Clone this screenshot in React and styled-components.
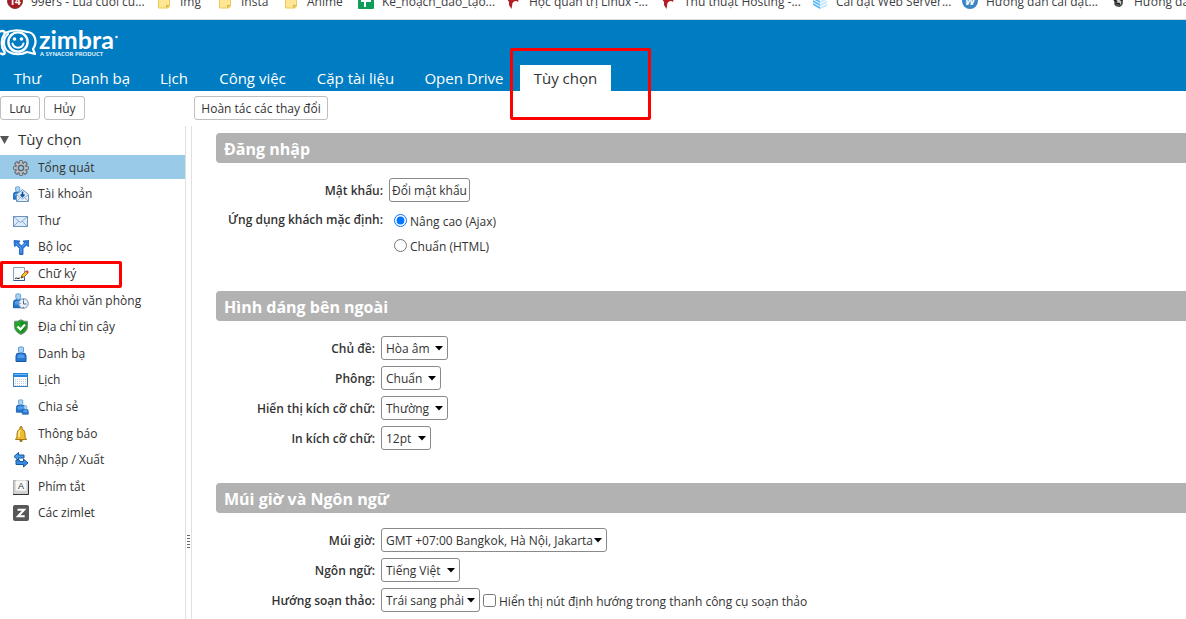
import React, { useState } from "react";
import styled, { createGlobalStyle, css } from "styled-components";

const GlobalStyle = createGlobalStyle`
  *, *::before, *::after { box-sizing: border-box; }
  html, body { margin: 0; height: 100%; overflow: hidden; background: #fff; }
  body, button, select, input {
    font-family: "Segoe UI", "Open Sans", "Noto Sans", sans-serif;
    font-size: 12px;
    line-height: 16px;
    color: #333;
  }
`;

const Page = styled.div`
  display: flex;
  flex-direction: column;
  min-height: 100vh;
`;

const BookmarkBar = styled.nav`
  display: flex;
  align-items: flex-end;
  height: 20px;
  padding: 0 0 9px 7px;
  overflow: hidden;
  border-bottom: 1px solid #dadce0;
`;

const Bookmark = styled.a`
  display: flex;
  flex: none;
  align-items: center;
  gap: 8px;
  width: ${(p) => p.$width}px;
  color: #3c4043;
  text-decoration: none;
  white-space: nowrap;
  svg { flex: none; }
`;

const Header = styled.header`
  background: #007cc3;
`;

const LogoLink = styled.a`
  display: block;
  height: 45px;
  svg { display: block; }
`;

const Tabs = styled.nav`
  display: flex;
  gap: 3px;
`;

const Tab = styled.a`
  position: relative;
  flex: none;
  width: ${(p) => p.$width}px;
  height: 26px;
  font-size: 15px;
  line-height: 26px;
  text-align: center;
  text-decoration: none;
  white-space: nowrap;
  color: ${(p) => (p.$active ? "#333" : "#fff")};
  background: ${(p) => (p.$active ? "#fff" : "transparent")};
`;

const Highlight = styled.span`
  position: absolute;
  z-index: 2;
  border: 3px solid #fe0000;
  border-radius: 2px;
  pointer-events: none;
`;

const TabHighlight = styled(Highlight)`
  left: -10px;
  top: -17px;
  width: 141px;
  height: 72px;
`;

const ItemHighlight = styled(Highlight)`
  left: 0;
  top: 0;
  width: 122px;
  height: 27px;
`;

const Toolbar = styled.div`
  display: flex;
  gap: 4px;
  padding: 5px 0 6px;
`;

const ToolbarStart = styled.div`
  display: flex;
  gap: 4px;
  width: 190px;
`;

const Button = styled.button`
  height: 24px;
  padding: 2px 0 0;
  width: ${(p) => p.$width}px;
  border: 1px solid ${(p) => (p.$strong ? "#8a8a8a" : "#bfbfbf")};
  border-radius: 3px;
  background: #fff;
  white-space: nowrap;
`;

const Body = styled.div`
  display: flex;
  flex: 1;
`;

const Sidebar = styled.aside`
  flex: none;
  width: 185px;
`;

const SidebarTitle = styled.h2`
  display: flex;
  align-items: center;
  gap: 9px;
  margin: 0;
  height: 29px;
  padding-bottom: 3px;
  font-size: 15px;
  font-weight: 400;
`;

const FolderList = styled.ul`
  display: flex;
  flex-direction: column;
  justify-content: space-between;
  height: 370px;
  margin: 0;
  padding: 0;
  list-style: none;
`;

const Folder = styled.li`
  position: relative;
  background: ${(p) => (p.$active ? "#99cae7" : "transparent")};
`;

const FolderLink = styled.a`
  display: flex;
  align-items: center;
  gap: 9px;
  height: 24px;
  padding: 1px 0 0 13px;
  color: #333;
  text-decoration: none;
`;

const Splitter = styled.div`
  flex: none;
  width: 7px;
  padding: 409px 1px 0;
  border: solid #e0e0e0;
  border-width: 0 1px;
  svg { display: block; }
`;

const Main = styled.main`
  flex: 1;
  min-width: 0;
  padding: 7px 0 0 24px;
`;

const SectionTitle = styled.h1`
  margin: 0;
  height: 30px;
  padding: 1px 8px 0;
  border-radius: 4px 0 0 4px;
  background: #b2b2b2;
  color: #fff;
  font-size: 16px;
  line-height: 30px;
  font-weight: 700;
`;

const Form = styled.div`
  display: grid;
  grid-template-columns: ${(p) => p.$labelWidth}px 1fr;
  gap: 6px;
  padding: 15px 0 ${(p) => p.$bottom}px;
`;

const labelText = css`
  font-weight: 600;
  text-align: right;
  white-space: nowrap;
`;

const Label = styled.label`
  ${labelText}
  line-height: 26px;
  height: 24px;
`;

const GroupLabel = styled.span`
  ${labelText}
  line-height: 24px;
`;

const Controls = styled.div`
  display: flex;
  align-items: center;
  gap: 3px;
`;

const Choices = styled.div`
  display: flex;
  flex-direction: column;
  gap: 1px;
  padding-left: 5px;
`;

const Choice = styled.label`
  display: flex;
  align-items: center;
  gap: 3px;
  height: 24px;
  white-space: nowrap;
  input { flex: none; width: 13px; height: 13px; margin: 0; }
`;

const ChoiceText = styled.span`
  padding-top: 3px;
`;

const SelectBox = styled.span`
  position: relative;
  display: block;
  flex: none;
  width: ${(p) => p.$width}px;
  svg { position: absolute; right: 5px; top: 10px; pointer-events: none; }
`;

const Select = styled.select`
  display: block;
  appearance: none;
  width: 100%;
  height: 24px;
  padding: 2px 0 0 4px;
  border: 1px solid #8a8a8a;
  border-radius: 3px;
  background: #fff;
`;

const Icon = ({ children }) => (
  <svg width="16" height="16" viewBox="0 0 16 16" aria-hidden="true">{children}</svg>
);

const FolderIcon = () => (
  <Icon>
    <path d="M2.5 1.500h11v10.500l-1.500 2h-9.500z" fill="#ffe694" stroke="#edca55" />
    <path d="M10 14v-3h3.500z" fill="#d9b443" />
  </Icon>
);

const RIcon = () => (
  <Icon>
    <path d="M2 5C5 2 11 1 14 4L13 8C11 6 9 7 7.500 9L6.500 15L4 11L4 8Z" fill="#b51d24" />
  </Icon>
);

const BadgeIcon = () => (
  <Icon>
    <circle cx="8" cy="7" r="7.500" fill="#a5191f" stroke="#8a3935" />
    <text x="8" y="11" textAnchor="middle" fontSize="10" fontWeight="700" fill="#fff">14</text>
  </Icon>
);

const SheetIcon = () => (
  <Icon>
    <rect width="16" height="15" rx="1" fill="#0f9d58" />
    <path d="M3 7h10M7 3v10" stroke="#fff" strokeWidth="2" />
  </Icon>
);

const StackIcon = () => (
  <Icon>
    {[0, 3, 6, 9].map((y) => (
      <g key={y}>
        <path d={`M1 ${y}l7 4v2l-7-4z`} fill="#55b9f5" />
        <path d={`M8 ${y + 4}l7-3v2l-7 3z`} fill="#c4e5fa" />
      </g>
    ))}
  </Icon>
);

const WordIcon = () => (
  <Icon>
    <circle cx="8" cy="7" r="8" fill="#3e85c6" />
    <text x="8" y="11" textAnchor="middle" fontSize="11" fontStyle="italic" fontWeight="700" fill="#fff">W</text>
  </Icon>
);

const PenguinIcon = () => (
  <Icon>
    <path d="M6 5.500q5-2 6 1v3q-1 3-4 2.500-3-.500-3-3z" fill="#ccc" stroke="#444" strokeWidth="1.600" />
    <path d="M4 6l3 2M9 3l3 4M6 9.500l4 .5" stroke="#222" strokeWidth="2" />
  </Icon>
);

const Logo = () => (
  <svg width="120" height="45" viewBox="0 0 120 45" role="img" aria-label="Zimbra">
    <g fill="none" stroke="#fff" strokeLinecap="round" strokeLinejoin="round">
      <path d="M0 11.500C4 10 6 12 4 15C1 19 1 27 4 31C6 34 3 35 1 33.500" strokeWidth="2.400" />
      <circle cx="18" cy="22" r="9.600" strokeWidth="2.400" />
      <path d="M8 14C2 19 3 29 9 32C14 35 22 35 27 32L35 34L33 29C38 22 35 12 27 12" strokeWidth="2.200" />
      <path d="M5 13C13 9 21 10 27 12" strokeWidth="2" />
      <path d="M12.500 23.500C14 29 22 29 23.500 23.500" strokeWidth="2" />
    </g>
    <circle cx="14.500" cy="19" r="1.800" fill="#fff" />
    <circle cx="21.500" cy="19" r="1.800" fill="#fff" />
    <text x="39" y="29" fontFamily="Lato, sans-serif" fontWeight="700" fontSize="25" fill="#fff">zimbra</text>
    <circle cx="116.500" cy="17" r="1.200" fill="#fff" />
    <text x="40" y="36" fontFamily="Open Sans, sans-serif" fontWeight="600" fontSize="6" fill="#fff">
      A SYNACOR PRODUCT
    </text>
  </svg>
);

const Person = ({ x = 0, y = 0, s = 1 }) => (
  <g transform={`translate(${x} ${y}) scale(${s})`}>
    <path d="M.5 15.500V10q0-3 3-3h4q3 0 3 3v5.500z" fill="#2878cf" stroke="#1658a5" />
    <path d="M2 12v-2q0-1.500 2-1.500h3q2 0 2 1.500v2z" fill="#4c9deb" />
    <path d="M3 1.500q2.500-1.500 5 0v4q-2.500 3-5 0z" fill="#a9d4f5" stroke="#5f9fd5" />
  </g>
);

const Envelope = () => (
  <>
    <rect x=".5" y="3.500" width="14" height="10" fill="#dceafa" stroke="#6d93ba" />
    <path d="M1 4l6.500 5.500L14 4M1 13l5-5M14 13L9 8" fill="none" stroke="#86a9cc" />
  </>
);

const gearTeeth = [0, 45, 90, 135, 180, 225, 270, 315];

const GearIcon = () => (
  <Icon>
    {gearTeeth.map((angle) => (
      <rect key={angle} x="6.300" y=".5" width="3.400" height="4" rx="1" fill="#b9bdc2" stroke="#596069" transform={`rotate(${angle} 8 8)`} />
    ))}
    <circle cx="8" cy="8" r="5.200" fill="#b4b8bd" stroke="#6b727a" strokeWidth=".8" />
    {gearTeeth.map((angle) => (
      <rect key={angle} x="7" y="1.400" width="2" height="4" fill="#b9bdc2" transform={`rotate(${angle} 8 8)`} />
    ))}
    <circle cx="8" cy="8" r="2.600" fill="#99cae7" stroke="#5b626a" strokeWidth="1.200" />
  </Icon>
);

const AccountIcon = () => (
  <Icon>
    <Person x={0} y={0} s={0.85} />
    <path d="M3.500 8.500l6-5 6 5v7h-12z" fill="#e3effb" stroke="#6c93bc" />
    <path d="M4 15l4-4M15 15l-4-4M4 9l5.500 4L15 9" fill="none" stroke="#8eaed0" />
    <path d="M9.500 5.500v5M7.500 8.500l2 2 2-2" fill="none" stroke="#164f9b" strokeWidth="1.600" />
  </Icon>
);

const MailIcon = () => <Icon><Envelope /></Icon>;

const FilterIcon = () => (
  <Icon>
    <path d="M6.500 15.500v-6L3.700 6.300 1.500 7.500l-.5-6 6 .5-1.500 2L8.500 7l3-3L10 2l6-.5-.5 6-2.200-1.200-3.300 3.200v6z" fill="#2878df" stroke="#165bb7" strokeWidth=".8" />
    <path d="M8 14V9L3 4M9 8l4-4" fill="none" stroke="#5ea7fa" />
  </Icon>
);

const SignatureIcon = () => (
  <Icon>
    <path d="M.5 1.500h11v13H.5z" fill="#f8fbfe" stroke="#88a4c4" />
    <path d="M.500 14.500h11v-3" fill="none" stroke="#315b8a" />
    <path d="M2 12.500l1.500-.5 1.500.5 2-.5" fill="none" stroke="#222" />
    <path d="M8 12l1-3 4-4 2 2-4 4z" fill="#f8c62b" stroke="#8a5b15" strokeWidth=".8" />
    <path d="M12.500 5.500l1.500-1.500 2 2-1.500 1.500z" fill="#e13e38" />
    <path d="M8 12l1-2 1 1z" fill="#222" />
  </Icon>
);

const AwayIcon = () => (
  <Icon>
    <Person x={0} y={0} s={0.95} />
    <circle cx="10.500" cy="10.500" r="4.800" fill="#e8f0f8" stroke="#7890aa" />
    <path d="M10.500 7.500v3.500h3M10.500 6v1M10.500 14v1M6.500 10.500h1" fill="none" stroke="#4c6788" />
  </Icon>
);

const ShieldIcon = () => (
  <Icon>
    <path d="M8 .8q3 2 6.500 1.500v5.200q0 5-6.500 8-6.500-3-6.500-8V2.300Q5 2.800 8 .8z" fill="#21a32c" stroke="#75887a" />
    <path d="M8 2q3 2 5.300 1.300v4.200q0 3.500-5.300 6.500z" fill="#168d21" />
    <path d="M4.500 7.500l3 3 4.500-5" fill="none" stroke="#fff" strokeWidth="2.200" />
  </Icon>
);

const ContactIcon = () => <Icon><Person x={2.5} /></Icon>;

const CalendarIcon = () => (
  <Icon>
    <rect x=".5" y="1.500" width="14" height="13" fill="#fff" stroke="#3c7dbb" />
    <path d="M0 1h15v4H0z" fill="#2683dc" />
    <path d="M1 2.500h13" stroke="#6bb8f6" />
    <path d="M2 7.500h11M2 9.500h11M2 11.500h11M2 13.500h11" stroke="#bfc9d3" strokeDasharray="1 1" />
  </Icon>
);

const ShareIcon = () => (
  <Icon>
    <Person x={3} s={0.85} />
    <Person x={9} y={6} s={0.6} />
  </Icon>
);

const BellIcon = () => (
  <Icon>
    <circle cx="8" cy="14.500" r="1.500" fill="#94701a" />
    <path d="M7 3V.800h2V3q3 1 3 5v3l1.500 2.500h-11L4 11V8q0-4 3-5z" fill="#efbd2b" stroke="#a67916" />
    <path d="M6 11V7q0-2 1.500-2.500" fill="none" stroke="#fff0a0" strokeWidth="1.600" />
  </Icon>
);

const TransferIcon = () => (
  <Icon>
    <path d="M1 4.500L5.500.500V3H11v3H5.500v2.500z" fill="#4699e9" stroke="#15599f" />
    <path d="M15 11l-4.500-4v2.500H6.500v-1.500H3v4.500h7.500V15z" fill="#388ce0" stroke="#15599f" />
  </Icon>
);

const KeyIcon = () => (
  <Icon>
    <path d="M.5 1.500h15v14H.5z" fill="#cfcfcf" stroke="#aaa" />
    <path d="M0 15.500h15.500V2" fill="none" stroke="#333" />
    <rect x="2.500" y="1.500" width="11" height="10.500" rx="1" fill="#f8f8f8" stroke="#ddd" />
    <text x="8" y="10" textAnchor="middle" fontSize="9" fontFamily="Liberation Sans, sans-serif" fill="#333">A</text>
  </Icon>
);

const ZimletIcon = () => (
  <Icon>
    <rect width="16" height="16" rx="2" fill="#575757" />
    <path d="M4.500 4.800h6.700L5 11.200h6.700" fill="none" stroke="#fff" strokeWidth="2" />
  </Icon>
);

const bookmarks = [
  ["99ers - Lúa cuối cù...", BadgeIcon, 149],
  ["Img", FolderIcon, 61],
  ["Insta", FolderIcon, 66],
  ["Anime", FolderIcon, 75],
  ["Kế_hoạch_đào_tạo...", SheetIcon, 147],
  ["Học quản trị Linux -...", RIcon, 155],
  ["Thủ thuật Hosting -...", RIcon, 152],
  ["Cài đặt Web Server...", StackIcon, 150],
  ["Hướng dẫn cài đặt...", WordIcon, 148],
  ["Hướng dẫn cài đặt...", PenguinIcon, 148],
];

const tabs = [
  ["Thư", 55],
  ["Danh bạ", 85],
  ["Lịch", 56],
  ["Công việc", 95],
  ["Cặp tài liệu", 105],
  ["Open Drive", 106],
  ["Tùy chọn", 91],
];

const folders = [
  ["Tổng quát", GearIcon],
  ["Tài khoản", AccountIcon],
  ["Thư", MailIcon],
  ["Bộ lọc", FilterIcon],
  ["Chữ ký", SignatureIcon],
  ["Ra khỏi văn phòng", AwayIcon],
  ["Địa chỉ tin cậy", ShieldIcon],
  ["Danh bạ", ContactIcon],
  ["Lịch", CalendarIcon],
  ["Chia sẻ", ShareIcon],
  ["Thông báo", BellIcon],
  ["Nhập / Xuất", TransferIcon],
  ["Phím tắt", KeyIcon],
  ["Các zimlet", ZimletIcon],
];

function SelectRow({ id, label, value, width, children }) {
  return (
    <>
      <Label htmlFor={id}>{label}</Label>
      <Controls>
        <SelectBox $width={width}>
          <Select id={id} defaultValue={value}>
            <option>{value}</option>
          </Select>
          <svg width="8" height="5" viewBox="0 0 8 5" aria-hidden="true">
            <path d="M0 0h8L4 4.500z" fill="#000" />
          </svg>
        </SelectBox>
        {children}
      </Controls>
    </>
  );
}

export default function App() {
  const [client, setClient] = useState("ajax");
  return (
    <Page>
      <GlobalStyle />
      <BookmarkBar>
        {bookmarks.map(([text, Glyph, width], i) => (
          <Bookmark href="#" key={i} $width={width}><Glyph />{text}</Bookmark>
        ))}
      </BookmarkBar>
      <Header>
        <LogoLink href="#"><Logo /></LogoLink>
        <Tabs>
          {tabs.map(([text, width]) => {
            const active = text === "Tùy chọn";
            return (
              <Tab href="#" key={text} $width={width} $active={active}>
                {text}
                {active && <TabHighlight />}
              </Tab>
            );
          })}
        </Tabs>
      </Header>
      <Toolbar>
        <ToolbarStart>
          <Button type="button" $width={40}>Lưu</Button>
          <Button type="button" $width={41}>Hủy</Button>
        </ToolbarStart>
        <Button type="button" $width={134}>Hoàn tác các thay đổi</Button>
      </Toolbar>
      <Body>
        <Sidebar>
          <SidebarTitle>
            <svg width="9" height="9" viewBox="0 0 9 9" aria-hidden="true">
              <path d="M0 1h9L4.500 9z" fill="#555" />
            </svg>
            Tùy chọn
          </SidebarTitle>
          <FolderList>
            {folders.map(([text, Glyph], i) => (
              <Folder key={text} $active={i === 0}>
                <FolderLink href="#"><Glyph />{text}</FolderLink>
                {text === "Chữ ký" && <ItemHighlight />}
              </Folder>
            ))}
          </FolderList>
        </Sidebar>
        <Splitter>
          <svg width="3" height="14" viewBox="0 0 3 14" aria-hidden="true">
            <path d="M0 .5h3M0 3.500h3M0 6.500h3M0 9.500h3M0 12.500h3" stroke="#666" />
          </svg>
        </Splitter>
        <Main>
          <section>
            <SectionTitle>Đăng nhập</SectionTitle>
            <Form $labelWidth={167} $bottom={34}>
              <Label htmlFor="password">Mật khẩu:</Label>
              <Controls>
                <Button id="password" type="button" $strong $width={81}>Đổi mật khẩu</Button>
              </Controls>
              <GroupLabel id="client-label">Ứng dụng khách mặc định:</GroupLabel>
              <Choices role="radiogroup" aria-labelledby="client-label">
                <Choice>
                  <input type="radio" name="client" checked={client === "ajax"} onChange={() => setClient("ajax")} />
                  <ChoiceText>Nâng cao (Ajax)</ChoiceText>
                </Choice>
                <Choice>
                  <input type="radio" name="client" checked={client === "html"} onChange={() => setClient("html")} />
                  <ChoiceText>Chuẩn (HTML)</ChoiceText>
                </Choice>
              </Choices>
            </Form>
          </section>
          <section>
            <SectionTitle>Hình dáng bên ngoài</SectionTitle>
            <Form $labelWidth={159} $bottom={33}>
              <SelectRow id="theme" label="Chủ đề:" value="Hòa âm" width={67} />
              <SelectRow id="font" label="Phông:" value="Chuẩn" width={60} />
              <SelectRow id="display-size" label="Hiển thị kích cỡ chữ:" value="Thường" width={67} />
              <SelectRow id="print-size" label="In kích cỡ chữ:" value="12pt" width={50} />
            </Form>
          </section>
          <section>
            <SectionTitle>Múi giờ và Ngôn ngữ</SectionTitle>
            <Form $labelWidth={159} $bottom={0}>
              <SelectRow id="timezone" label="Múi giờ:" value="GMT +07:00 Bangkok, Hà Nội, Jakarta" width={226} />
              <SelectRow id="language" label="Ngôn ngữ:" value="Tiếng Việt" width={79} />
              <SelectRow id="direction" label="Hướng soạn thảo:" value="Trái sang phải" width={99}>
                <Choice>
                  <input type="checkbox" />
                  <ChoiceText>Hiển thị nút định hướng trong thanh công cụ soạn thảo</ChoiceText>
                </Choice>
              </SelectRow>
            </Form>
          </section>
        </Main>
      </Body>
    </Page>
  );
}
